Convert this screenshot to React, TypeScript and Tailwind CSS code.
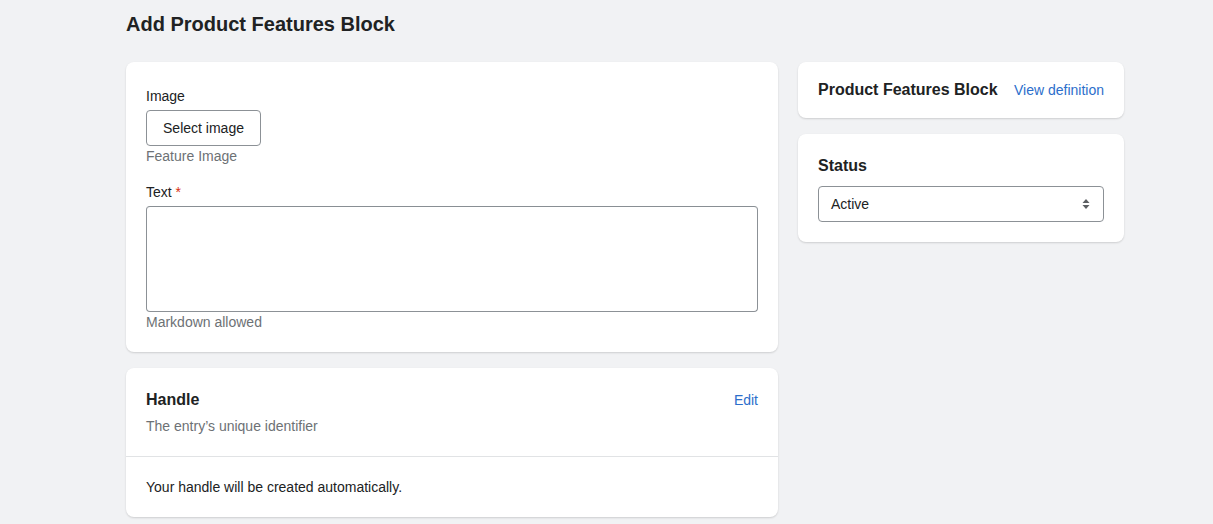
export default function App() {
  return (
    <div
      className="min-h-[524px] bg-[#f1f2f4] pl-[126px] pt-[11px] text-[#202223]"
      style={{ fontFamily: '"Liberation Sans", Arial, sans-serif' }}
    >
      <div className="w-[998px]">
        <h1 className="text-[20px] font-bold leading-[26px]">Add Product Features Block</h1>
        <div className="mt-[25px] flex gap-5">
          {/* Main column */}
          <div className="flex w-[652px] flex-col gap-4">
            <div className="rounded-lg bg-white px-5 pb-5 pt-[25px] shadow-[0_1px_2px_rgba(0,0,0,0.15)]">
              <label className="block text-sm leading-[18px]">Image</label>
              <button className="mt-[5px] h-9 w-[115px] rounded border border-[#8c9196] text-sm">Select image</button>
              <p className="text-sm leading-5 text-[#6d7175]">Feature Image</p>
              <label className="mt-[17px] block text-sm leading-[18px]">
                Text <span className="text-[#d72c0d]">*</span>
              </label>
              <textarea className="mt-[5px] block h-[106px] w-full resize-none rounded border border-[#8c9196] border-t-[#898f94]" />
              <p className="text-sm leading-5 text-[#6d7175]">Markdown allowed</p>
            </div>
            <div className="rounded-lg bg-white shadow-[0_1px_2px_rgba(0,0,0,0.15)]">
              <div className="px-5 pb-5 pt-[20px]">
                <div className="flex items-center justify-between">
                  <h2 className="text-[16px] font-bold leading-6">Handle</h2>
                  <a className="text-sm text-[#2c6ecb]">Edit</a>
                </div>
                <p className="mt-[4px] text-sm leading-5 text-[#6d7175]">The entry’s unique identifier</p>
              </div>
              <div className="border-t border-[#e1e3e5] px-5 pb-[20px] pt-[20px] text-sm leading-5">
                Your handle will be created automatically.
              </div>
            </div>
          </div>
          {/* Side column */}
          <div className="flex w-[326px] flex-col gap-4">
            <div className="flex h-14 items-center justify-between rounded-lg bg-white px-5 shadow-[0_1px_2px_rgba(0,0,0,0.15)]">
              <h2 className="text-[16px] font-bold">Product Features Block</h2>
              <a className="text-sm text-[#2c6ecb]">View definition</a>
            </div>
            <div className="rounded-lg bg-white px-5 pb-5 pt-[20px] shadow-[0_1px_2px_rgba(0,0,0,0.15)]">
              <h2 className="text-[16px] font-bold leading-6">Status</h2>
              <div className="mt-[8px] flex h-9 items-center justify-between rounded border border-[#8c9196] pl-3 pr-3 text-sm">
                <span>Active</span>
                <svg width="10" height="12" viewBox="0 0 10 12" fill="#5c5f62">
                  <path d="M5 1 L8.5 5 H1.5 Z" />
                  <path d="M5 11 L8.5 7 H1.5 Z" />
                </svg>
              </div>
            </div>
          </div>
        </div>
      </div>
    </div>
  );
}
